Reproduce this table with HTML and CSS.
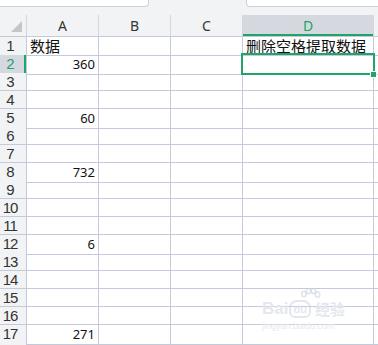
FILE: index.html
```html
<!DOCTYPE html>
<html lang="zh-CN">
<head>
<meta charset="utf-8">
<title>删除空格提取数据</title>
<link rel="stylesheet" href="styles.css">
</head>
<body>
<div class="sheet">
  <div class="toolbar">
    <div class="toolbar-inner">
      <div class="name-box">D2</div>
      <div class="fx-icons"><span class="zoom-ico">⌕</span><span class="fx">fx</span></div>
      <div class="formula-box"></div>
    </div>
  </div>

  <div class="grid">
    <div class="row head">
      <div class="cell rh corner"><span class="tri"></span></div>
      <div class="cell ch">A</div>
      <div class="cell ch">B</div>
      <div class="cell ch">C</div>
      <div class="cell ch sel">D</div>
      <div class="cell ch last"></div>
    </div>
    <div class="row">
      <div class="cell rh">1</div>
      <div class="cell txt">数据</div>
      <div class="cell"></div>
      <div class="cell"></div>
      <div class="cell txt">删除空格提取数据</div>
      <div class="cell last"></div>
    </div>
    <div class="row">
      <div class="cell rh sel">2</div>
      <div class="cell num">360</div>
      <div class="cell"></div>
      <div class="cell"></div>
      <div class="cell active"><span class="cursor"><span class="handle"></span></span></div>
      <div class="cell last"></div>
    </div>
    <div class="row"><div class="cell rh">3</div><div class="cell"></div><div class="cell"></div><div class="cell"></div><div class="cell"></div><div class="cell last"></div></div>
    <div class="row"><div class="cell rh">4</div><div class="cell"></div><div class="cell"></div><div class="cell"></div><div class="cell"></div><div class="cell last"></div></div>
    <div class="row"><div class="cell rh">5</div><div class="cell num">60</div><div class="cell"></div><div class="cell"></div><div class="cell"></div><div class="cell last"></div></div>
    <div class="row"><div class="cell rh">6</div><div class="cell"></div><div class="cell"></div><div class="cell"></div><div class="cell"></div><div class="cell last"></div></div>
    <div class="row"><div class="cell rh">7</div><div class="cell"></div><div class="cell"></div><div class="cell"></div><div class="cell"></div><div class="cell last"></div></div>
    <div class="row"><div class="cell rh">8</div><div class="cell num">732</div><div class="cell"></div><div class="cell"></div><div class="cell"></div><div class="cell last"></div></div>
    <div class="row"><div class="cell rh">9</div><div class="cell"></div><div class="cell"></div><div class="cell"></div><div class="cell"></div><div class="cell last"></div></div>
    <div class="row"><div class="cell rh">10</div><div class="cell"></div><div class="cell"></div><div class="cell"></div><div class="cell"></div><div class="cell last"></div></div>
    <div class="row"><div class="cell rh">11</div><div class="cell"></div><div class="cell"></div><div class="cell"></div><div class="cell"></div><div class="cell last"></div></div>
    <div class="row"><div class="cell rh">12</div><div class="cell num">6</div><div class="cell"></div><div class="cell"></div><div class="cell"></div><div class="cell last"></div></div>
    <div class="row"><div class="cell rh">13</div><div class="cell"></div><div class="cell"></div><div class="cell"></div><div class="cell"></div><div class="cell last"></div></div>
    <div class="row"><div class="cell rh">14</div><div class="cell"></div><div class="cell"></div><div class="cell"></div><div class="cell"></div><div class="cell last"></div></div>
    <div class="row"><div class="cell rh">15</div><div class="cell"></div><div class="cell"></div><div class="cell"></div><div class="cell"></div><div class="cell last"></div></div>
    <div class="row"><div class="cell rh">16</div><div class="cell"></div><div class="cell"></div><div class="cell"></div><div class="cell"></div><div class="cell last"></div></div>
    <div class="row"><div class="cell rh">17</div><div class="cell num">271</div><div class="cell"></div><div class="cell"></div><div class="cell"></div><div class="cell last"></div></div>
    <div class="row"><div class="cell rh">18</div><div class="cell"></div><div class="cell"></div><div class="cell"></div><div class="cell"></div><div class="cell last"></div></div>
  </div>

  <div class="watermark">
    <svg class="wm-paw" width="22" height="16" viewBox="0 0 22 16">
      <g fill="none" stroke="rgba(205,210,222,0.6)" stroke-width="1.6">
        <ellipse cx="5" cy="6" rx="2.2" ry="2.8"/>
        <ellipse cx="9.5" cy="3" rx="2.2" ry="2.6"/>
        <ellipse cx="14.5" cy="3" rx="2.2" ry="2.6"/>
        <ellipse cx="18.5" cy="6.5" rx="2.2" ry="2.8"/>
      </g>
    </svg>
    <div class="wm-logo"><span class="wm-bai">Bai</span><span class="wm-du">du</span><span class="wm-jy">经验</span></div>
    <div class="wm-url">jingyan.baidu.com</div>
  </div>
</div>
</body>
</html>
```

FILE: styles.css
```css
* { box-sizing: border-box; }

html, body {
  margin: 0;
  padding: 0;
  background: #ffffff;
  overflow: hidden;
}

.sheet {
  position: relative;
  width: 378px;
  height: 345px;
  overflow: hidden;
  font-family: "Noto Sans", "Noto Sans CJK SC", sans-serif;
  color: #222;
}

/* formula bar, only its lower edge is in view */
.toolbar {
  height: 15px;
  overflow: hidden;
  background: #f2f3f5;
}

.toolbar-inner {
  display: flex;
  height: 28px;
  margin-top: -21px;
}

.name-box {
  width: 149px;
  background: #fff;
  border-right: 1px solid #cdd0d6;
  border-bottom: 1px solid #cdd0d6;
  border-radius: 0 0 4px 0;
  padding-right: 12px;
  text-align: center;
  font-size: 14px;
  line-height: 24px;
  color: #333;
}

.fx-icons {
  width: 97px;
  display: flex;
  justify-content: flex-end;
  gap: 6px;
  padding-right: 8px;
  font-size: 14px;
  line-height: 24px;
  color: #555;
}

.formula-box {
  flex: 1;
  background: #fff;
  border-left: 1px solid #cdd0d6;
  border-bottom: 1px solid #cdd0d6;
  border-radius: 0 0 0 4px;
}

/* sheet grid */
.row {
  display: grid;
  grid-template-columns: 27px 72px 72px 72px 131px 1fr;
  height: 18px;
}

.row.head {
  height: 22px;
}

.cell {
  position: relative;
  border-right: 1px solid #c4cadc;
  border-bottom: 1px solid #c4cadc;
  white-space: nowrap;
}

.cell.last {
  border-right: none;
}

.head .cell {
  background: #f2f3f5;
  border-right-color: #d3d6de;
  border-bottom-color: #c4cadc;
}

.ch {
  text-align: center;
  font-size: 14px;
  line-height: 21px;
  color: #333;
}

.head .cell.ch.sel {
  background: #d5d8df;
  color: #1fa366;
  box-shadow: inset 0 -2px 0 #21a46a;
}

.rh {
  background: #f2f3f5;
  text-align: center;
  padding-right: 6px;
  font-family: "Liberation Sans", sans-serif;
  font-size: 15px;
  line-height: 17px;
  letter-spacing: -1px;
  color: #333;
}

.rh.sel {
  background: #d5d8df;
  color: #1fa366;
  box-shadow: inset -2px 0 0 #21a46a;
}

.corner {
  display: flex;
  justify-content: flex-end;
  align-items: flex-end;
  padding: 0 4px 4px 0;
}

.tri {
  width: 11px;
  height: 11px;
  background: #c3c5cb;
  clip-path: polygon(100% 0, 100% 100%, 0 100%);
}

.txt {
  padding-left: 3px;
  font-family: "Noto Sans CJK SC", sans-serif;
  font-size: 15px;
  line-height: 18px;
  color: #111;
}

.num {
  text-align: right;
  padding-right: 3px;
  font-size: 13px;
  line-height: 19px;
  color: #111;
}

/* active cell frame with fill handle */
.cursor {
  position: absolute;
  left: -2px;
  top: -2px;
  right: -2px;
  bottom: -1px;
  border: 2px solid #21a46a;
  z-index: 2;
}

.handle {
  position: absolute;
  right: -3px;
  bottom: -4px;
  width: 5px;
  height: 5px;
  background: #21a46a;
  outline: 1px solid #fff;
}

/* faint site mark in the corner */
.watermark {
  position: absolute;
  left: 262px;
  top: 288px;
  width: 92px;
  color: rgba(205, 210, 222, 0.55);
  text-shadow: 0 0 1px #fff;
  pointer-events: none;
}

.wm-paw {
  display: block;
  margin-left: 37px;
  margin-bottom: -4px;
}

.wm-logo {
  display: flex;
  align-items: flex-end;
  gap: 1px;
  font-size: 17px;
  line-height: 18px;
}

.wm-bai {
  font-family: "Liberation Sans", sans-serif;
  font-weight: bold;
}

.wm-du {
  font-family: "Liberation Sans", sans-serif;
  font-weight: bold;
  font-size: 11px;
  line-height: 14px;
  border: 2px solid rgba(205, 210, 222, 0.55);
  border-radius: 8px 8px 6px 6px;
  padding: 0 2px;
  margin-right: 3px;
}

.wm-jy {
  font-family: "Noto Sans CJK SC", sans-serif;
  font-weight: bold;
  font-size: 15px;
}

.wm-url {
  font-family: "Liberation Sans", sans-serif;
  font-size: 9px;
  line-height: 12px;
  margin-top: 2px;
}
```
